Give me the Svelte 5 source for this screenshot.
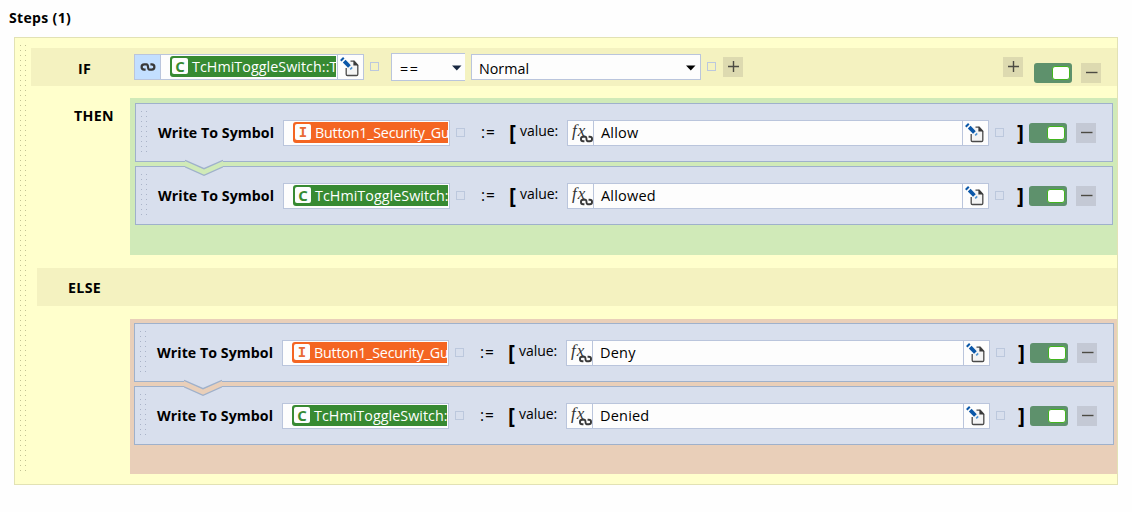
<script>
  const branches = [
    { kind: 'then', values: ['Allow', 'Allowed'] },
    { kind: 'else', values: ['Deny', 'Denied'] }
  ];
  const symbols = [
    { letter: 'I', text: 'Button1_Security_Gu' },
    { letter: 'C', text: 'TcHmiToggleSwitch:' }
  ];
  const condition = { letter: 'C', text: 'TcHmiToggleSwitch::T' };
</script>

{#snippet linkShape()}
  <path d="M5.6 7.6H4.2a2.6 2.6 0 0 1 0-5.2h2.3C9.2 2.4 6.8 7.6 9.5 7.6h2.3a2.6 2.6 0 0 0 0-5.2h-1.4" />
{/snippet}

{#snippet chip(symbol)}
  <span class="chip {symbol.letter === 'I' ? 'orange' : 'green'}">
    <b class="letter">{symbol.letter}</b><span class="name">{symbol.text}</span>
  </span>
{/snippet}

{#snippet edit()}
  <span class="edit">
    <svg width="25" height="24" viewBox="0 0 25 24">
      <path d="M9.2 6.2h7l4.2 4.2v9.2q0 1-1 1h-9.2q-1 0-1-1z" fill="#f4f4f4" />
      <path d="M12.5 6.1h3.7l3.6 4.2v9q0 1.2-1.2 1.2H9.4q-1.2 0-1.2-1.2V13" fill="none" stroke="#4a4a4a" stroke-width="1.3" />
      <path d="M15.4 5.6l5 5h-5z" fill="#3a3a3a" />
      <path d="M6.2 6.2l5.2 5.3" stroke="#0a57a8" stroke-width="3.8" />
      <path d="M2.8 5.7l3-3" stroke="#0a57a8" stroke-width="2" />
      <path d="M12.2 14.4l2-2" stroke="#4b91cf" stroke-width="1.5" />
    </svg>
  </span>
{/snippet}

{#snippet toggle()}
  <span class="toggle"><i></i></span>
{/snippet}

{#snippet sign(plus)}
  <span class="sign">
    <svg width="20" height="20" viewBox="0 0 20 20">
      <path d={plus ? 'M5 9.5h11M10.5 4v11' : 'M5 9.5h11.5'} />
    </svg>
  </span>
{/snippet}

{#snippet rows(branch)}
  <div class="branch {branch.kind}">
    {#each branch.values as value, n}
      <div class="row">
        <span class="dots"></span>
        <b class="label">Write To Symbol</b>
        <span class="field symbol">{@render chip(symbols[n])}</span>
        <span class="square"></span>
        <span class="assign">:=</span>
        <span class="bracket open">[</span>
        <span class="param">value:</span>
        <span class="field value">
          <span class="fx">
            <em>f</em><em class="x">x</em>
            <svg width="13" height="8" viewBox="0.5 0.5 15 9">{@render linkShape()}</svg>
          </span>
          <span class="text">{value}</span>
          {@render edit()}
        </span>
        <span class="square"></span>
        <span class="bracket close">]</span>
        {@render toggle()}
        {@render sign(false)}
        {#if n === 0}
          <svg class="arrow" width="38" height="18" viewBox="0 0 38 18">
            <path class="above" d="M0 0H38V1.5L19 9.5L0 1.5z" />
            <path class="gap" d="M0 1.5L19 9.5L38 1.5V8L19 16.4L0 8z" />
            <path class="line" d="M0 1.3L19 9.7L38 1.3M0 7.8L19 16.4L38 7.8" />
          </svg>
        {/if}
      </div>
    {/each}
  </div>
{/snippet}

<main>
  <h1>Steps (1)</h1>
  <section class="panel">
    <span class="dots tall"></span>
    <div class="body">
      <div class="band if">
        <b class="word">IF</b>
        <span class="field condition">
          <span class="link"><svg width="16" height="10" viewBox="0 0 16 10">{@render linkShape()}</svg></span>
          <span class="clip">{@render chip(condition)}</span>
          {@render edit()}
        </span>
        <span class="square"></span>
        <span class="select op"><span>==</span><svg width="10" height="6"><path d="M0 .5h9.5L4.8 5.5z" fill="#182840" /></svg></span>
        <span class="select state"><span>Normal</span><svg width="10" height="6"><path d="M0 .5h9.5L4.8 5.5z" /></svg></span>
        <span class="square"></span>
        {@render sign(true)}
        <span class="actions">
          {@render sign(true)}
          <span class="lowered">{@render toggle()}{@render sign(false)}</span>
        </span>
      </div>
      <div class="split">
        <b class="word">THEN</b>
        {@render rows(branches[0])}
      </div>
      <div class="band otherwise"><b class="word">ELSE</b></div>
      <div class="split last">
        <b class="word"></b>
        {@render rows(branches[1])}
      </div>
    </div>
  </section>
</main>

<style>
  :global(body) { background: #fefefe; }
  main, main :global(*) { box-sizing: border-box; }
  main {
    width: 1132px;
    height: 512px;
    padding: 0 14px;
    overflow: hidden;
    font: 14.5px/20px "Open Sans", "Noto Sans", sans-serif;
    color: #000;
  }
  h1 { margin: 0 0 0 -5px; padding-top: 8px; height: 37px; font-size: 14px; line-height: 20px; font-weight: 700; letter-spacing: 0.35px; }
  .panel { width: 1104px; height: 448px; display: flex; border: 1px solid #e2e2b4; background: #ffffcc; }
  .dots {
    flex: none;
    width: 10px;
    height: 45px;
    background: radial-gradient(circle at .5px .5px, #a9b3c8 0 .7px, transparent .8px) 0 0 / 5px 5px;
  }
  .dots.tall {
    height: 430px;
    margin: 7px 0 0 5px;
    background-image: radial-gradient(circle at .5px .5px, #c2c294 0 .7px, transparent .8px);
  }
  .body { flex: 1; padding-top: 10px; }
  .band { display: flex; height: 38px; margin-left: 1px; background: #f4f2c0; }
  .word { flex: none; font-weight: 700; font-size: 14.2px; letter-spacing: 0.35px; }
  .if .word { width: 103px; padding: 11px 0 0 47px; }
  .otherwise { margin: 13px 0 13px 7px; }
  .otherwise .word { padding: 10px 0 0 31px; }
  .split { display: flex; margin-top: 12px; padding-left: 1px; }
  .split .word { width: 99px; padding: 8px 0 0 43px; }
  .split.last { margin-top: 0; }
  .branch { flex: 1; height: 157px; padding: 5px 4px 0 5px; --tone: #d0eab8; background: var(--tone); }
  .branch.else { height: 155px; padding: 4px 3px 0 4px; --tone: #e9cfb9; }
  .row {
    position: relative;
    display: flex;
    height: 59px;
    margin-bottom: 4px;
    padding: 0 16px 0 5px;
    border: 1px solid #9fb1cb;
    background: #d8dfed;
  }
  .row > * { flex: none; margin-top: 19px; }
  .row > .dots { margin-top: 7px; }
  .label { width: 132px; padding-left: 7px; font-size: 14.2px; letter-spacing: 0.05px; white-space: nowrap; }
  .field, .edit, .fx, .link { display: flex; }
  .field { height: 26px; border: 1px solid #bac5dc; background: #fdfdfd; }
  .row > .field { margin-top: 16px; }
  .symbol { width: 167px; padding: 1px 1px 0 9px; overflow: hidden; }
  .chip { display: flex; width: 100%; height: 21px; overflow: hidden; border-radius: 3px 0 0 3px; padding: 2px 0 0 2px; color: #fff; white-space: nowrap; }
  .chip.orange { background: #f46522; --ink: #e96a35; }
  .chip.green { background: #378a32; --ink: #378a32; }
  .letter { flex: none; width: 16px; height: 16px; border-radius: 2px; background: #fdfdfd; color: var(--ink); font: 700 15px/16px "Open Sans", sans-serif; text-align: center; }
  .orange .letter { font: 700 14px/17px "DejaVu Sans Mono", monospace; }
  .name { margin: -1px 0 0 4px; font-size: 14.3px; letter-spacing: -0.22px; }
  .green .name { letter-spacing: 0.05px; }
  .square { flex: none; width: 9px; height: 9px; border: 1px solid #bcc8dd; }
  .row > .square { margin: 24px 0 0 6px; }
  .assign { width: 45px; padding-left: 16px; font-size: 15.5px; letter-spacing: 0.9px; }
  .row > .assign { margin-top: 18px; }
  .bracket { font-weight: 700; font-size: 21px; }
  .row > .bracket { margin-top: 18px; }
  .open { width: 10px; text-indent: -1px; }
  .close { width: 25px; padding-left: 13px; }
  .param { width: 47px; font-size: 14px; letter-spacing: -0.05px; }
  .row > .param { margin-top: 17px; }
  .row > .value { flex: 1; }
  .fx { position: relative; width: 26px; border-right: 1px solid #bac5dc; color: #333; font: 17px/20px "Liberation Serif", serif; padding-left: 4px; }
  .fx .x { margin-left: 1px; }
  .fx svg { position: absolute; left: 12px; top: 14px; }
  .fx path, .link path { fill: none; stroke: #383838; stroke-width: 2.2; }
  .text { flex: 1; padding: 2px 0 0 7px; font-size: 14.5px; letter-spacing: 0.2px; }
  .edit { flex: none; width: 26px; border-left: 1px solid #bac5dc; }
  .toggle { flex: none; display: flex; width: 38px; height: 20px; border-radius: 3px; background: #5e916c; }
  .toggle i { width: 18px; height: 14px; margin: 3px 0 0 18px; border: 1px solid #42b51e; border-radius: 3px; background: #fff; }
  .sign { flex: none; width: 20px; height: 20px; background: #dddab0; }
  .sign svg { display: block; }
  .sign path { stroke: #4c4b43; stroke-width: 1.4; fill: none; }
  .row > .sign { margin-left: 9px; background: #c4c9d5; }
  .arrow { position: absolute; left: 49px; top: 55px; z-index: 1; }
  .row > .arrow { margin: 0; }
  .above { fill: #d8dfed; }
  .gap { fill: var(--tone); }
  .line { fill: none; stroke: #9fb1cb; stroke-width: 1.3; }
  .condition { width: 230px; margin-top: 6px; }
  .link { width: 26px; background: #c3dfff; border-right: 1px solid #bac5dc; align-items: center; justify-content: center; }
  .clip { flex: 1; min-width: 0; padding: 1px 1px 0 9px; }
  .if > .square { margin: 14px 12px 0 6px; }
  .select { display: flex; justify-content: space-between; border: 1px solid #bac5dc; background: #fdfdfd; font-size: 14.3px; }
  .op { width: 74px; height: 28px; margin: 5px 6px 0 0; padding: 5px 3px 0 8px; border-right: 0; }
  .op span { letter-spacing: 1.6px; }
  .op svg { margin-top: 6px; }
  .state { width: 230px; height: 26px; margin-top: 6px; padding: 4px 4px 0 7px; }
  .state svg { margin-top: 6px; }
  .if > .state + .square { margin-right: 7px; }
  .if > .sign { margin-top: 9px; }
  .actions { display: flex; margin: 9px 16px 0 auto; gap: 11px; }
  .lowered { display: flex; gap: 9px; margin-top: 6px; }
</style>
